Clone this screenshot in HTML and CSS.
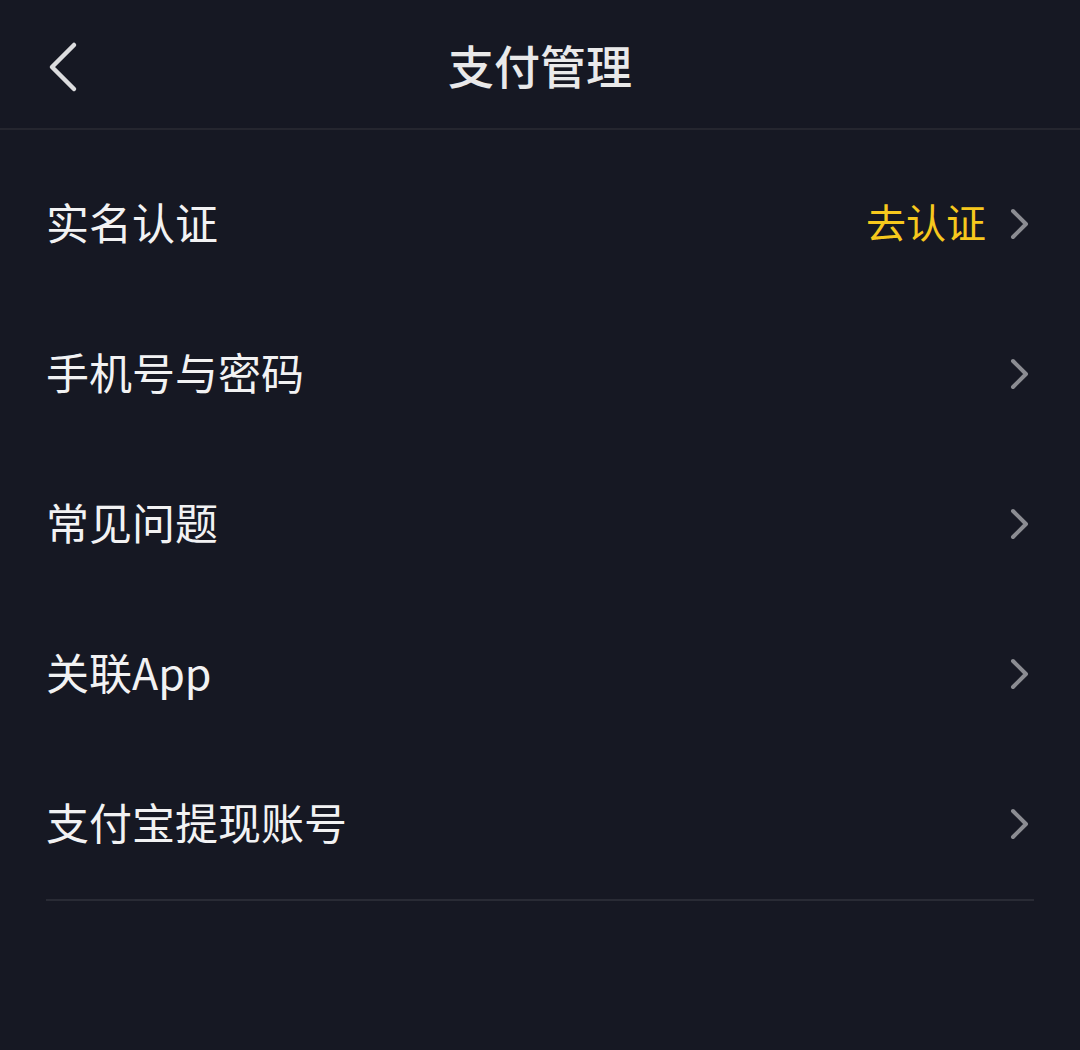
FILE: index.html
```html
<!DOCTYPE html>
<html lang="zh-CN">
<head>
  <meta charset="UTF-8">
  <title>支付管理</title>
  <link rel="stylesheet" href="styles.css">
</head>
<body>

  <div class="topbar">
    <span class="back">
      <svg width="34" height="52" viewBox="0 0 34 52">
        <path d="M26 4 L4 26 L26 48" fill="none" stroke="#dcdcde" stroke-width="4.5" stroke-linecap="round" stroke-linejoin="round"/>
      </svg>
    </span>
    <h1>支付管理</h1>
  </div>

  <div class="list">
    <div class="row">
      <span class="label">实名认证</span>
      <span class="extra">去认证</span>
      <svg class="arrow" width="20" height="32" viewBox="0 0 20 32"><path d="M3 3 L16 16 L3 29" fill="none" stroke="#8b8c92" stroke-width="4" stroke-linecap="round" stroke-linejoin="round"/></svg>
    </div>
    <div class="row">
      <span class="label">手机号与密码</span>
      <svg class="arrow" width="20" height="32" viewBox="0 0 20 32"><path d="M3 3 L16 16 L3 29" fill="none" stroke="#8b8c92" stroke-width="4" stroke-linecap="round" stroke-linejoin="round"/></svg>
    </div>
    <div class="row">
      <span class="label">常见问题</span>
      <svg class="arrow" width="20" height="32" viewBox="0 0 20 32"><path d="M3 3 L16 16 L3 29" fill="none" stroke="#8b8c92" stroke-width="4" stroke-linecap="round" stroke-linejoin="round"/></svg>
    </div>
    <div class="row">
      <span class="label">关联App</span>
      <svg class="arrow" width="20" height="32" viewBox="0 0 20 32"><path d="M3 3 L16 16 L3 29" fill="none" stroke="#8b8c92" stroke-width="4" stroke-linecap="round" stroke-linejoin="round"/></svg>
    </div>
    <div class="row">
      <span class="label">支付宝提现账号</span>
      <svg class="arrow" width="20" height="32" viewBox="0 0 20 32"><path d="M3 3 L16 16 L3 29" fill="none" stroke="#8b8c92" stroke-width="4" stroke-linecap="round" stroke-linejoin="round"/></svg>
    </div>
  </div>

</body>
</html>
```

FILE: styles.css
```css
body {
  margin: 0;
  background: #161823;
  font-family: "Noto Sans CJK SC", "Noto Sans", sans-serif;
  color: #f2f2f3;
  height: 1050px;
}

.topbar {
  height: 128px;
  border-bottom: 2px solid #25262f;
  display: flex;
  align-items: center;
  justify-content: center;
  position: relative;
}

.back {
  position: absolute;
  left: 48px;
  top: 41px;
  display: flex;
}

h1 {
  margin: 0;
  font-size: 46px;
  font-weight: 500;
  color: #e9e9ea;
}

.list {
  margin: 19px 46px 0;
  border-bottom: 2px solid #292b35;
}

.row {
  height: 150px;
  display: flex;
  align-items: center;
}

.label {
  flex: 1;
  font-size: 43px;
  margin-bottom: 6px;
}

.extra {
  font-size: 40px;
  color: #f7c81d;
  margin: 0 24px 6px 0;
}

.arrow {
  margin-right: 4px;
}
```
